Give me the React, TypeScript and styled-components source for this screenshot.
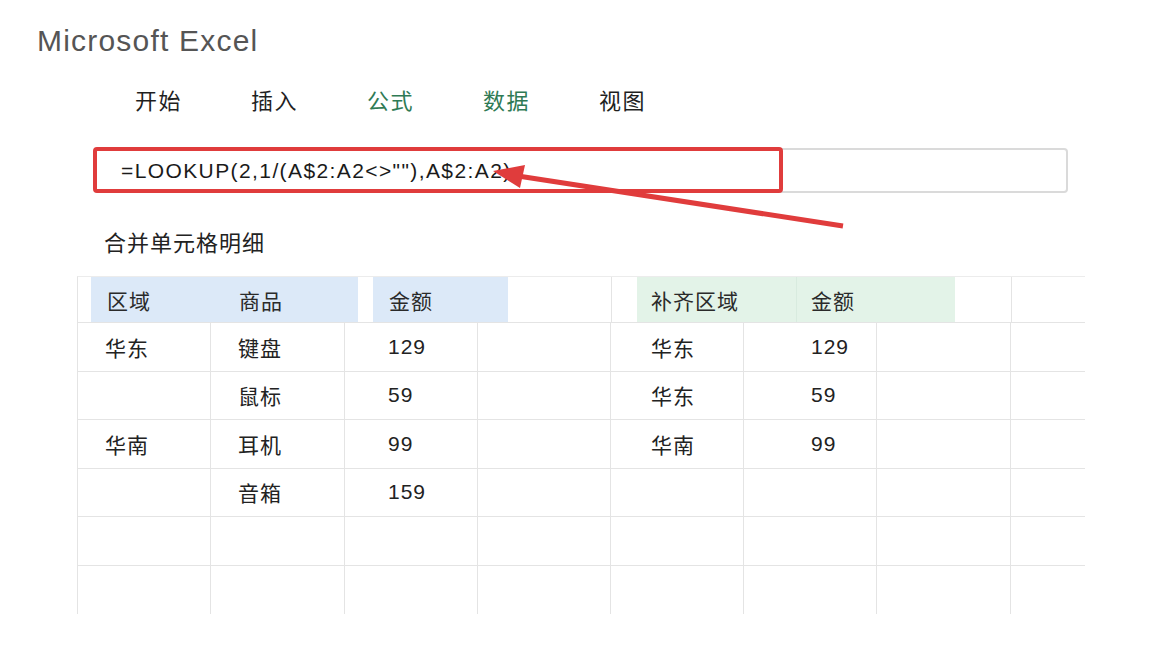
import React from 'react';
import styled, { createGlobalStyle } from 'styled-components';

const GlobalStyle = createGlobalStyle`
  html, body {
    margin: 0;
    padding: 0;
    background: #fff;
  }
  body {
    font-family: "Liberation Sans", "Noto Sans CJK SC", sans-serif;
  }
`;

const Page = styled.div`
  position: relative;
  width: 1167px;
  height: 667px;
  overflow: hidden;
  background: #fff;
`;

const Brand = styled.div`
  padding: 23px 0 0 37px;
  height: 36px;
  font-size: 30px;
  line-height: 36px;
  letter-spacing: 1.2px;
  color: #555;
`;

const Tabs = styled.nav`
  display: flex;
  gap: 69px;
  margin-top: 25px;
  padding-left: 135px;
  height: 30px;
`;

const Tab = styled.span<{ $green?: boolean }>`
  font-family: "Noto Sans CJK SC", sans-serif;
  font-size: 22px;
  line-height: 30px;
  letter-spacing: 1.5px;
  color: ${(p) => (p.$green ? '#2f7a55' : '#1f1f1f')};
`;

const FormulaBar = styled.div`
  position: relative;
  box-sizing: border-box;
  margin: 34px 0 0 95px;
  width: 973px;
  height: 45px;
  border: 2px solid #dadada;
  border-radius: 4px;
  display: flex;
  align-items: center;
  padding-left: 24px;
`;

const Formula = styled.span`
  font-size: 21px;
  letter-spacing: 1.4px;
  color: #1a1a1a;
`;

const Highlight = styled.div`
  position: absolute;
  left: -4px;
  top: -3px;
  width: 690px;
  height: 46px;
  box-sizing: border-box;
  border: 4px solid #e03c3c;
  border-radius: 4px;
`;

const SectionTitle = styled.h2`
  margin: 33px 0 0 104px;
  height: 30px;
  font-family: "Noto Sans CJK SC", sans-serif;
  font-weight: 400;
  font-size: 22px;
  line-height: 30px;
  letter-spacing: 1px;
  color: #222;
`;

const Sheet = styled.div`
  margin: 20px 0 0 77px;
  width: 1008px;
  font-size: 21px;
  color: #222;
`;

const HeaderRow = styled.div`
  display: flex;
  height: 47px;
  border-top: 1px solid #ececec;
  border-bottom: 1px solid #e4e4e4;
  border-left: 1px solid #e4e4e4;
  box-sizing: border-box;
`;

const Gap = styled.div<{ $w: number; $line?: boolean }>`
  width: ${(p) => p.$w}px;
  flex: none;
  border-right: ${(p) => (p.$line ? '1px solid #e4e4e4' : 'none')};
`;

const HeadBlock = styled.div<{ $w: number; $tone: 'blue' | 'green' }>`
  width: ${(p) => p.$w}px;
  flex: none;
  display: flex;
  align-items: center;
  background: ${(p) => (p.$tone === 'blue' ? '#dce9f8' : '#e3f3e8')};
`;

const HeadLabel = styled.span<{ $w: number; $pad: number; $split?: boolean }>`
  box-sizing: border-box;
  width: ${(p) => p.$w}px;
  height: 100%;
  display: flex;
  align-items: center;
  padding-left: ${(p) => p.$pad}px;
  font-family: "Noto Sans CJK SC", sans-serif;
  font-size: 21px;
  letter-spacing: 1px;
  color: #2a2a2a;
  border-right: ${(p) => (p.$split ? '1px solid #d8ebdf' : 'none')};
`;

const cols = [134, 134, 133, 133, 133, 133, 134, 74];
const pads = [27, 27, 43, 0, 40, 67, 0, 0];

const Row = styled.div<{ $last?: boolean }>`
  display: grid;
  grid-template-columns: ${cols.map((c) => `${c}px`).join(' ')};
  height: 48.5px;
  box-sizing: border-box;
  border-bottom: ${(p) => (p.$last ? 'none' : '1px solid #e4e4e4')};
`;

const Cell = styled.div<{ $pad: number; $first?: boolean; $end?: boolean }>`
  display: flex;
  align-items: center;
  padding-left: ${(p) => p.$pad}px;
  border-left: ${(p) => (p.$first ? '1px solid #e4e4e4' : 'none')};
  border-right: ${(p) => (p.$end ? 'none' : '1px solid #e4e4e4')};
  font-family: "Liberation Sans", "Noto Sans CJK SC", sans-serif;
  font-size: 21px;
  letter-spacing: 1px;
  color: #222;
`;

const Overlay = styled.svg`
  position: absolute;
  left: 0;
  top: 0;
  pointer-events: none;
`;

const rows: string[][] = [
  ['华东', '键盘', '129', '', '华东', '129', '', ''],
  ['', '鼠标', '59', '', '华东', '59', '', ''],
  ['华南', '耳机', '99', '', '华南', '99', '', ''],
  ['', '音箱', '159', '', '', '', '', ''],
  ['', '', '', '', '', '', '', ''],
  ['', '', '', '', '', '', '', ''],
];

const tabs = [
  { label: '开始' },
  { label: '插入' },
  { label: '公式', green: true },
  { label: '数据', green: true },
  { label: '视图' },
];

export default function App() {
  return (
    <Page>
      <GlobalStyle />
      <Brand>Microsoft Excel</Brand>
      <Tabs>
        {tabs.map((t) => (
          <Tab key={t.label} $green={t.green}>
            {t.label}
          </Tab>
        ))}
      </Tabs>
      <FormulaBar>
        <Formula>=LOOKUP(2,1/(A$2:A2&lt;&gt;""),A$2:A2)</Formula>
        <Highlight />
      </FormulaBar>
      <SectionTitle>合并单元格明细</SectionTitle>
      <Sheet>
        <HeaderRow>
          <Gap $w={13} />
          <HeadBlock $w={267} $tone="blue">
            <HeadLabel $w={132} $pad={16}>区域</HeadLabel>
            <HeadLabel $w={135} $pad={16}>商品</HeadLabel>
          </HeadBlock>
          <Gap $w={15} />
          <HeadBlock $w={135} $tone="blue">
            <HeadLabel $w={135} $pad={16}>金额</HeadLabel>
          </HeadBlock>
          <Gap $w={103} $line />
          <Gap $w={25} />
          <HeadBlock $w={318} $tone="green">
            <HeadLabel $w={160} $pad={14} $split>补齐区域</HeadLabel>
            <HeadLabel $w={158} $pad={14}>金额</HeadLabel>
          </HeadBlock>
          <Gap $w={56} $line />
        </HeaderRow>
        {rows.map((r, i) => (
          <Row key={i} $last={i === rows.length - 1}>
            {r.map((v, j) => (
              <Cell key={j} $pad={pads[j]} $first={j === 0} $end={j === cols.length - 1}>
                {v}
              </Cell>
            ))}
          </Row>
        ))}
      </Sheet>
      <Overlay width={1167} height={667} viewBox="0 0 1167 667">
        <line x1={843} y1={226} x2={518} y2={176} stroke="#e03c3c" strokeWidth={5} />
        <polygon points="493,171 525,165 520,188" fill="#e03c3c" />
      </Overlay>
    </Page>
  );
}
